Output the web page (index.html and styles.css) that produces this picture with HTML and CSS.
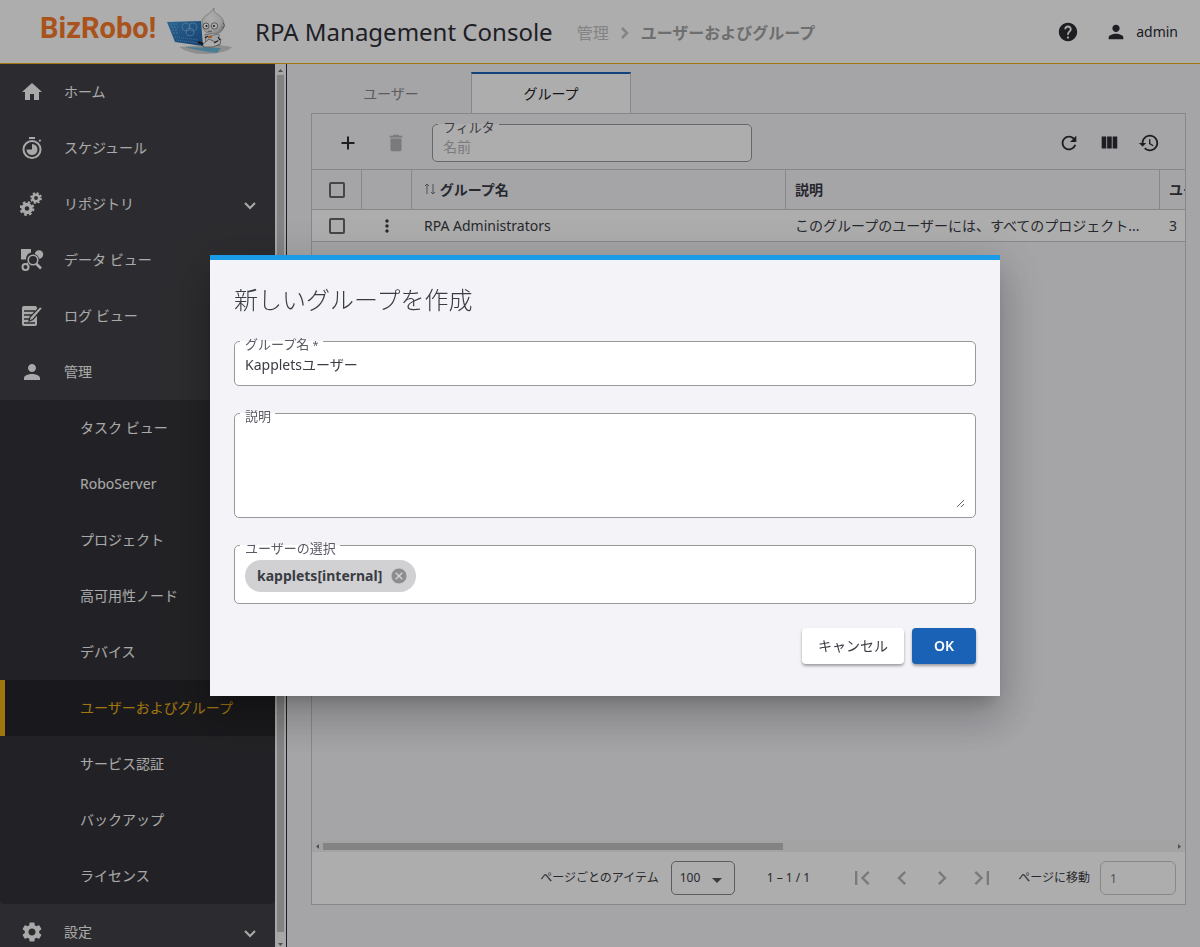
FILE: index.html
```html
<!DOCTYPE html>
<html lang="ja">
<head>
    <meta charset="UTF-8">
    <meta name="viewport" content="width=device-width, initial-scale=1.0">
    <title>RPA Management Console</title>
    <link rel="stylesheet" href="styles.css">
</head>
<body>
    <header class="header">
        <a href="#" class="logo">
            <span class="logo-text">BizRobo!</span>
            <svg class="logo-robot" width="66" height="48" viewBox="0 0 66 48">
                <defs>
                    <linearGradient id="screen" x1="0" y1="0" x2="1" y2="1">
                        <stop offset="0" stop-color="#3f95d6"/>
                        <stop offset="1" stop-color="#2160a8"/>
                    </linearGradient>
                    <radialGradient id="head" cx=".4" cy=".4" r=".7">
                        <stop offset="0" stop-color="#fff"/>
                        <stop offset=".7" stop-color="#e6e6e6"/>
                        <stop offset="1" stop-color="#a9a9a9"/>
                    </radialGradient>
                </defs>
                <path d="M12 39 46 36 65 39Q60 45 40 46 24 47 12 39z" fill="#d2d2d2"/>
                <path d="M18 39 54 40 50 45Q32 43 18 39z" fill="#6fb9dc"/>
                <path d="M35 12Q37 8 42 5.500 45 3 47 0 46 4 50 6 58 10 57 19 55 26 46 26 37 26 35 18z" fill="url(#head)" stroke="#999" stroke-width=".6"/>
                <path d="M38 26Q46 29 52 26L53 37 39 38z" fill="#efefef" stroke="#8d8d8d" stroke-width=".7"/>
                <path d="M36 36 42 31 48 34 54 31 53 36 46 39 36 39z" fill="#fff" stroke="#666" stroke-width=".7"/>
                <path d="M38 30l3-2M51 29l2 3M47 35l4-2" stroke="#333" stroke-width="1.200"/>
                <path d="M41 28h4v2h-4z" fill="#f28b3a"/>
                <circle cx="39" cy="18" r="3" fill="#fff" stroke="#666" stroke-width=".8"/>
                <circle cx="39.500" cy="18" r="1.100" fill="#333"/>
                <circle cx="47.500" cy="18" r="3.200" fill="#fff" stroke="#666" stroke-width=".8"/>
                <circle cx="47" cy="18" r="1.100" fill="#333"/>
                <path d="M41 23q2 1 4 0" fill="none" stroke="#666" stroke-width=".8"/>
                <path d="M56 15q3 2 0 5" fill="#ddd" stroke="#555" stroke-width=".8"/>
                <path d="M0 14 34 13 36 38 8 34z" fill="url(#screen)"/>
                <g fill="none" stroke="#a8d2ef" stroke-width=".7" opacity=".7">
                    <path d="M3 16h7M4 19h7M5 22h6M6 25h6" stroke-dasharray="2 1"/>
                    <path d="M8 29l24 3M9 32l23 3" stroke-dasharray="1 1"/>
                    <circle cx="19" cy="19" r="4"/>
                    <circle cx="26" cy="19" r="4"/>
                    <circle cx="23" cy="24" r="4"/>
                </g>
                <path d="M31 34l5 2" stroke="#222" stroke-width="2"/>
            </svg>
        </a>
        <h1 class="app-title">RPA Management Console</h1>
        <nav class="breadcrumb" aria-label="breadcrumb">
            <a href="#">管理</a>
            <svg width="8" height="14" viewBox="0 0 8 14"><path d="M1 2l5 5-5 5" fill="none" stroke="currentColor" stroke-width="2.500"/></svg>
            <span class="breadcrumb-current">ユーザーおよびグループ</span>
        </nav>
        <div class="header-actions">
            <button class="icon-btn" aria-label="ヘルプ">
                <svg width="22" height="22" viewBox="0 0 24 24"><path d="M12 2C6.48 2 2 6.48 2 12s4.48 10 10 10 10-4.48 10-10S17.52 2 12 2zm1 17h-2v-2h2v2zm2.07-7.75l-.9.92C13.45 12.9 13 13.5 13 15h-2v-.5c0-1.1.45-2.1 1.17-2.83l1.24-1.26c.37-.36.59-.86.59-1.41 0-1.1-.9-2-2-2s-2 .9-2 2H8c0-2.21 1.79-4 4-4s4 1.79 4 4c0 .88-.36 1.68-.93 2.25z"/></svg>
            </button>
            <button class="user-btn">
                <svg width="22" height="22" viewBox="0 0 24 24"><path d="M12 12c2.21 0 4-1.79 4-4s-1.79-4-4-4-4 1.79-4 4 1.79 4 4 4zm0 2c-2.67 0-8 1.34-8 4v2h16v-2c0-2.66-5.33-4-8-4z"/></svg>
                admin
            </button>
        </div>
    </header>

    <div class="layout">
        <aside class="sidebar">
            <nav class="menu">
                <a href="#" class="menu-item">
                    <svg width="24" height="24" viewBox="0 0 24 24"><path d="M10 20v-6h4v6h5v-8h3L12 3 2 12h3v8z"/></svg>
                    <span>ホーム</span>
                </a>
                <a href="#" class="menu-item">
                    <svg width="24" height="24" viewBox="0 0 24 24">
                        <circle cx="12" cy="13.5" r="8.5" fill="none" stroke="currentColor" stroke-width="2"/>
                        <path d="M9 1h6v2H9zM18.5 4.5l1.5-1.2 1.3 1.5-1.5 1.3z"/>
                        <path d="M12 8v5.500H6.500A5.500 5.500 0 1 0 12 8z"/>
                    </svg>
                    <span>スケジュール</span>
                </a>
                <a href="#" class="menu-item">
                    <svg width="24" height="24" viewBox="0 0 24 24">
                        <circle cx="7" cy="16.500" r="4" fill="none" stroke="currentColor" stroke-width="3.400"/>
                        <circle cx="7" cy="16.500" r="6.300" fill="none" stroke="currentColor" stroke-width="2.200" stroke-dasharray="2.600 2.350"/>
                        <circle cx="16" cy="6" r="3.200" fill="none" stroke="currentColor" stroke-width="2.600"/>
                        <circle cx="16" cy="6" r="5" fill="none" stroke="currentColor" stroke-width="1.800" stroke-dasharray="2.100 1.830"/>
                    </svg>
                    <span>リポジトリ</span>
                    <svg class="menu-arrow" width="12" height="8" viewBox="0 0 12 8"><path d="M1 1l5 5 5-5" fill="none" stroke="currentColor" stroke-width="2"/></svg>
                </a>
                <a href="#" class="menu-item">
                    <svg width="24" height="24" viewBox="0 0 24 24">
                        <path d="M1 1h10v3.500A7 7 0 0 0 6 11.500H1z"/>
                        <circle cx="19" cy="6.500" r="4.200"/>
                        <circle cx="5.500" cy="19" r="3" fill="none" stroke="currentColor" stroke-width="2"/>
                        <path d="M6.500 17l2-3" fill="none" stroke="currentColor" stroke-width="1.500"/>
                        <circle cx="13" cy="12" r="6.200" fill="#424247"/>
                        <circle cx="13" cy="12" r="4.800" fill="none" stroke="currentColor" stroke-width="1.600"/>
                        <path d="M16 15.500l5 5" fill="none" stroke="currentColor" stroke-width="2.600"/>
                    </svg>
                    <span>データ ビュー</span>
                </a>
                <a href="#" class="menu-item">
                    <svg width="24" height="24" viewBox="0 0 24 24">
                        <rect x="2" y="2" width="15" height="20" rx="2"/>
                        <path d="M4 7h11M4 11h8M4 15h5M4 19h11" fill="none" stroke="#424247" stroke-width="1.700"/>
                        <path d="M9 17l1-4L20 2.500l2.500 2L13 15.500z" stroke="#424247" stroke-width="1.200"/>
                    </svg>
                    <span>ログ ビュー</span>
                </a>
                <a href="#" class="menu-item">
                    <svg width="24" height="24" viewBox="0 0 24 24"><path d="M12 12c2.210 0 4-1.790 4-4s-1.790-4-4-4-4 1.790-4 4 1.790 4 4 4zm0 2c-2.670 0-8 1.340-8 4v2h16v-2c0-2.660-5.330-4-8-4z"/></svg>
                    <span>管理</span>
                </a>
                <div class="submenu">
                    <a href="#" class="menu-item">タスク ビュー</a>
                    <a href="#" class="menu-item">RoboServer</a>
                    <a href="#" class="menu-item">プロジェクト</a>
                    <a href="#" class="menu-item">高可用性ノード</a>
                    <a href="#" class="menu-item">デバイス</a>
                    <a href="#" class="menu-item active">ユーザーおよびグループ</a>
                    <a href="#" class="menu-item">サービス認証</a>
                    <a href="#" class="menu-item">バックアップ</a>
                    <a href="#" class="menu-item">ライセンス</a>
                </div>
                <a href="#" class="menu-item">
                    <svg width="24" height="24" viewBox="0 0 24 24"><path d="M19.14 12.94c.04-.3.06-.61.06-.94 0-.32-.02-.64-.07-.94l2.03-1.58c.18-.14.23-.41.12-.61l-1.92-3.32c-.12-.22-.37-.29-.59-.22l-2.39.96c-.5-.38-1.03-.7-1.62-.94l-.36-2.54c-.04-.24-.24-.41-.48-.41h-3.84c-.24 0-.43.17-.47.41l-.36 2.54c-.59.24-1.13.57-1.62.94l-2.39-.96c-.22-.08-.47 0-.59.22L2.74 8.87c-.12.21-.08.47.12.61l2.03 1.58c-.05.3-.09.63-.09.94s.02.64.07.94l-2.03 1.58c-.18.14-.23.41-.12.61l1.92 3.32c.12.22.37.29.59.22l2.39-.96c.5.38 1.03.7 1.62.94l.36 2.54c.05.24.24.41.48.41h3.84c.24 0 .44-.17.47-.41l.36-2.54c.59-.24 1.13-.56 1.62-.94l2.39.96c.22.08.47 0 .59-.22l1.92-3.32c.12-.22.07-.47-.12-.61l-2.01-1.58zM12 15.600c-1.980 0-3.600-1.620-3.600-3.600s1.620-3.600 3.600-3.600 3.600 1.620 3.600 3.600-1.620 3.600-3.600 3.600z"/></svg>
                    <span>設定</span>
                    <svg class="menu-arrow" width="12" height="8" viewBox="0 0 12 8"><path d="M1 1l5 5 5-5" fill="none" stroke="currentColor" stroke-width="2"/></svg>
                </a>
            </nav>
            <div class="scrollbar scrollbar-y">
                <svg width="5" height="3" viewBox="0 0 5 3"><path d="M0 3h5L2.500 0z"/></svg>
                <div class="thumb"></div>
                <svg width="5" height="3" viewBox="0 0 5 3"><path d="M0 0h5L2.500 3z"/></svg>
            </div>
        </aside>

        <main class="content">
            <div class="tabs" role="tablist">
                <button class="tab" role="tab">ユーザー</button>
                <button class="tab active" role="tab" aria-selected="true">グループ</button>
            </div>

            <section class="panel">
                <div class="toolbar">
                    <button class="icon-btn" aria-label="追加">
                        <svg width="24" height="24" viewBox="0 0 24 24"><path d="M18.500 13H13v5.500h-2V13H5.500v-2H11V5.500h2V11h5.500z"/></svg>
                    </button>
                    <button class="icon-btn" aria-label="削除" disabled>
                        <svg width="22" height="22" viewBox="0 0 24 24"><path d="M6 19c0 1.100.9 2 2 2h8c1.100 0 2-.9 2-2V7H6v12zM19 4h-3.500l-1-1h-5l-1 1H5v2h14V4z"/></svg>
                    </button>
                    <div class="field filter">
                        <label for="filter">フィルタ</label>
                        <input type="text" id="filter" placeholder="名前">
                    </div>
                    <div class="toolbar-right">
                        <button class="icon-btn" aria-label="更新">
                            <svg width="22" height="22" viewBox="0 0 24 24"><path d="M17.65 6.35C16.2 4.9 14.21 4 12 4c-4.42 0-7.99 3.58-7.99 8s3.57 8 7.99 8c3.73 0 6.84-2.55 7.73-6h-2.08c-.82 2.33-3.04 4-5.65 4-3.31 0-6-2.69-6-6s2.69-6 6-6c1.66 0 3.14.69 4.22 1.78L13 11h7V4l-2.35 2.35z"/></svg>
                        </button>
                        <button class="icon-btn" aria-label="列">
                            <svg width="22" height="22" viewBox="0 0 24 24"><path d="M10 18h5V5h-5v13zm-6 0h5V5H4v13zM16 5v13h5V5h-5z"/></svg>
                        </button>
                        <button class="icon-btn" aria-label="リセット">
                            <svg width="22" height="22" viewBox="0 0 24 24"><path d="M13 3c-4.97 0-9 4.03-9 9H1l3.89 3.89.07.14L9 12H6c0-3.87 3.13-7 7-7s7 3.13 7 7-3.13 7-7 7c-1.93 0-3.68-.79-4.94-2.06l-1.42 1.42C8.27 19.99 10.51 21 13 21c4.97 0 9-4.03 9-9s-4.03-9-9-9zm-1 5v5l4.28 2.54.72-1.21-3.5-2.08V8H12z"/></svg>
                        </button>
                    </div>
                </div>

                <div class="table-wrap">
                    <table class="groups">
                        <colgroup>
                            <col class="col-icon">
                            <col class="col-icon">
                            <col class="col-text">
                            <col class="col-text">
                            <col>
                        </colgroup>
                        <thead>
                            <tr>
                                <th class="center"><input type="checkbox" aria-label="すべて選択"></th>
                                <th></th>
                                <th class="name">
                                    <svg width="12" height="12" viewBox="0 0 12 12"><path d="M3 11V1M1 3l2-2 2 2M9 1v10M7 9l2 2 2-2" fill="none" stroke="currentColor"/></svg>
                                    グループ名
                                </th>
                                <th>説明</th>
                                <th>ユーザー</th>
                            </tr>
                        </thead>
                        <tbody>
                            <tr>
                                <td class="center"><input type="checkbox" aria-label="選択"></td>
                                <td class="center">
                                    <button class="row-menu" aria-label="メニュー">
                                        <svg width="20" height="20" viewBox="0 0 24 24"><path d="M12 8c1.100 0 2-.9 2-2s-.9-2-2-2-2 .9-2 2 .9 2 2 2zm0 2c-1.100 0-2 .9-2 2s.9 2 2 2 2-.9 2-2-.9-2-2-2zm0 6c-1.100 0-2 .9-2 2s.9 2 2 2 2-.9 2-2-.9-2-2-2z"/></svg>
                                    </button>
                                </td>
                                <td class="name">RPA Administrators</td>
                                <td>このグループのユーザーには、すべてのプロジェクト...</td>
                                <td>3</td>
                            </tr>
                        </tbody>
                    </table>
                </div>

                <div class="scrollbar scrollbar-x">
                    <svg width="3" height="5" viewBox="0 0 3 5"><path d="M3 0v5L0 2.500z"/></svg>
                    <div class="track"><div class="thumb"></div></div>
                    <svg width="3" height="5" viewBox="0 0 3 5"><path d="M0 0v5l3-2.500z"/></svg>
                </div>

                <div class="pager">
                    <label for="pageSize">ページごとのアイテム</label>
                    <div class="page-size">
                        <select id="pageSize">
                            <option>100</option>
                        </select>
                    </div>
                    <span class="range">1 – 1 / 1</span>
                    <div class="pager-buttons">
                        <button aria-label="最初のページ" disabled><svg width="28" height="28" viewBox="0 0 24 24"><path d="M18.410 16.590L13.820 12l4.590-4.590L17 6l-6 6 6 6zM6 6h2v12H6z"/></svg></button>
                        <button aria-label="前のページ" disabled><svg width="28" height="28" viewBox="0 0 24 24"><path d="M15.410 7.410L14 6l-6 6 6 6 1.410-1.410L10.830 12z"/></svg></button>
                        <button aria-label="次のページ" disabled><svg width="28" height="28" viewBox="0 0 24 24"><path d="M10 6L8.590 7.410 13.170 12l-4.580 4.590L10 18l6-6z"/></svg></button>
                        <button aria-label="最後のページ" disabled><svg width="28" height="28" viewBox="0 0 24 24"><path d="M5.590 7.410L10.180 12l-4.590 4.590L7 18l6-6-6-6zM16 6h2v12h-2z"/></svg></button>
                    </div>
                    <label for="pageNumber">ページに移動</label>
                    <input type="text" id="pageNumber" class="page-number" value="1">
                </div>
            </section>
        </main>
    </div>

    <div class="overlay">
        <form class="dialog" role="dialog" aria-labelledby="dialogTitle">
            <h2 id="dialogTitle">新しいグループを作成</h2>
            <div class="field">
                <label for="groupName">グループ名 <small>*</small></label>
                <input type="text" id="groupName" class="group-name" value="Kappletsユーザー">
            </div>
            <div class="field">
                <label for="description">説明</label>
                <textarea id="description"></textarea>
            </div>
            <div class="field users" role="group" aria-labelledby="usersLabel">
                <span class="field-label" id="usersLabel">ユーザーの選択</span>
                <div class="chip">
                    kapplets[internal]
                    <button type="button" aria-label="削除">
                        <svg width="18" height="18" viewBox="0 0 24 24"><path d="M12 2C6.47 2 2 6.47 2 12s4.47 10 10 10 10-4.47 10-10S17.53 2 12 2zm5 13.59L15.59 17 12 13.41 8.41 17 7 15.59 10.59 12 7 8.41 8.41 7 12 10.59 15.59 7 17 8.41 13.41 12 17 15.59z"/></svg>
                    </button>
                </div>
            </div>
            <div class="dialog-actions">
                <button type="button" class="btn">キャンセル</button>
                <button type="button" class="btn btn-primary">OK</button>
            </div>
        </form>
    </div>
</body>
</html>
```

FILE: styles.css
```css
:root {
    --page: #f3f3f8;
    --text: #3a3c44;
    --border: #c9c9cc;
    --field-border: #999;
    --menu: #424247;
    --submenu: #333338;
    --accent: #ebb014;
    --primary: #1a62b5;
}

* {
    margin: 0;
    padding: 0;
    box-sizing: border-box;
}

body {
    height: 100vh;
    display: flex;
    flex-direction: column;
    overflow: hidden;
    font-family: "Noto Sans", "Noto Sans CJK JP", sans-serif;
    font-size: 14px;
    line-height: 20px;
    color: var(--text);
    background: var(--page);
}

button,
input,
select,
textarea {
    font: inherit;
    color: inherit;
    border: none;
    background: none;
    outline: none;
}

button {
    cursor: pointer;
}

svg {
    display: block;
    flex: none;
    fill: currentColor;
}

/* Header */
.header {
    flex: none;
    height: 64px;
    display: flex;
    align-items: center;
    padding: 0 22px 0 40px;
    background: #fff;
    border-bottom: 1px solid var(--accent);
}

.logo {
    display: flex;
    align-items: center;
    gap: 11px;
    width: 215px;
    text-decoration: none;
}

.logo-text {
    font-family: Roboto, sans-serif;
    font-size: 29px;
    font-weight: 700;
    line-height: 40px;
    padding-bottom: 8px;
    color: #fb792a;
}

.app-title {
    font-size: 24px;
    font-weight: 400;
    line-height: 32px;
    color: #2e2e38;
}

.breadcrumb {
    display: flex;
    align-items: center;
    gap: 12px;
    margin-left: 24px;
    padding-top: 2px;
    font-size: 16px;
    color: #c2c2c5;
}

.breadcrumb a {
    color: inherit;
    text-decoration: none;
}

.breadcrumb-current {
    font-weight: 700;
    color: #a3a3a6;
}

.header-actions {
    display: flex;
    align-items: center;
    gap: 17px;
    margin-left: auto;
    color: #2b2c33;
}

.user-btn {
    display: flex;
    align-items: center;
    gap: 9px;
}

.icon-btn {
    width: 40px;
    height: 40px;
    display: flex;
    align-items: center;
    justify-content: center;
    color: #2b2c33;
}

.icon-btn:disabled {
    color: #b4b4b8;
}

/* Sidebar */
.layout {
    flex: 1;
    min-height: 0;
    display: flex;
}

.sidebar {
    width: 287px;
    display: flex;
    flex: none;
    border-right: 1px solid #2d2d33;
}

.menu {
    flex: 1;
    overflow: hidden;
    background: var(--menu);
}

.menu-item {
    height: 56px;
    display: flex;
    align-items: center;
    gap: 20px;
    padding: 0 19px 0 20px;
    color: #fafafa;
    text-decoration: none;
}

.menu-arrow {
    margin: 4px 0 0 auto;
}

.submenu {
    background: var(--submenu);
    border-radius: 0 0 4px 4px;
}

.submenu .menu-item {
    padding-left: 75px;
    border-left: 5px solid transparent;
}

.submenu .menu-item.active {
    color: var(--accent);
    background: #26262b;
    border-left-color: var(--accent);
}

.scrollbar {
    display: flex;
    align-items: center;
    flex: none;
    color: #777;
}

.scrollbar-y {
    flex-direction: column;
    width: 11px;
    gap: 3px;
    padding: 5px 0 1px;
    background: #f6f6f6;
}

.scrollbar-y .thumb {
    flex: 1;
    width: 7px;
    margin-bottom: 8px;
    background: #c2c2c2;
}

/* Content */
.content {
    flex: 1;
    min-width: 0;
    display: flex;
    flex-direction: column;
    padding: 8px 14px 42px 24px;
}

.tabs {
    display: flex;
    height: 41px;
}

.tab {
    width: 160px;
    color: #88888d;
    border-top: 2px solid transparent;
}

.tab.active {
    color: #222;
    background: #fff;
    border: 1px solid var(--border);
    border-top: 2px solid var(--primary);
    border-bottom: none;
}

.panel {
    flex: 1;
    min-height: 0;
    display: flex;
    flex-direction: column;
    border: 1px solid var(--border);
}

.toolbar {
    height: 56px;
    display: flex;
    align-items: center;
    gap: 8px;
    padding: 2px 16px 0;
    border-bottom: 1px solid var(--border);
}

.toolbar-right {
    display: flex;
    margin-left: auto;
}

/* Outlined field with its label over the top border */
.field {
    position: relative;
    background: #fff;
    border: 1px solid var(--field-border);
    border-radius: 5px;
}

.field label,
.field-label {
    position: absolute;
    top: -1px;
    left: 5px;
    padding: 0 4px 0 5px;
    font-size: 13px;
    line-height: 6px;
    color: #5b5b66;
    background: #fff;
}

.field input {
    display: block;
    width: 100%;
    padding: 0 10px;
}

.filter {
    width: 320px;
    margin-left: 8px;
}

.filter input {
    height: 36px;
    padding-top: 8px;
}

.filter input::placeholder {
    color: #b5b5b8;
}

.table-wrap {
    flex: 1;
    min-height: 0;
    overflow: hidden;
}

.groups {
    width: 1615px;
    table-layout: fixed;
    border-collapse: separate;
    border-spacing: 0;
}

.col-icon {
    width: 50px;
}

.col-text {
    width: 374px;
}

.groups th,
.groups td {
    padding: 0 9px;
    text-align: left;
    white-space: nowrap;
    border-bottom: 1px solid var(--border);
}

.groups th {
    height: 40px;
    border-right: 1px solid var(--border);
}

.groups td {
    height: 32px;
    background: #fff;
}

.groups .name {
    padding-left: 12px;
}

.groups th.name svg {
    display: inline-block;
    color: #777;
}

.groups .center {
    text-align: center;
}

.groups input {
    width: 16px;
    height: 16px;
    display: block;
    margin: 0 auto;
    appearance: none;
    border: 2px solid #66676d;
    border-radius: 2px;
}

.row-menu {
    display: block;
    margin: 0 auto;
}

.scrollbar-x {
    height: 11px;
    gap: 4px;
    padding: 0 4px;
    background: #f1f1f1;
}

.scrollbar-x .track {
    flex: 1;
}

.scrollbar-x .thumb {
    width: 54%;
    height: 7px;
    background: #c2c2c2;
}

.pager {
    height: 52px;
    display: flex;
    align-items: center;
    justify-content: flex-end;
    padding-right: 9px;
    font-size: 12px;
    background: #fff;
}

.page-size {
    position: relative;
    margin: 0 32px 0 12px;
}

.page-size select {
    width: 64px;
    height: 34px;
    padding-left: 8px;
    appearance: none;
    border: 1px solid #88888c;
    border-radius: 5px;
}

.page-size::after {
    content: "";
    position: absolute;
    top: 17px;
    right: 13px;
    border: 5px solid transparent;
    border-top-color: #55565c;
    border-bottom: none;
    pointer-events: none;
}

.pager-buttons {
    display: flex;
    margin: 0 16px 0 32px;
}

.pager-buttons button {
    width: 40px;
    height: 40px;
    display: flex;
    align-items: center;
    justify-content: center;
    color: #b4b4b8;
}

.page-number {
    width: 76px;
    height: 34px;
    margin-left: 10px;
    padding: 0 9px;
    color: #77777c;
    border: 1px solid var(--border);
    border-radius: 6px;
}

/* Dialog */
.overlay {
    position: fixed;
    inset: 0;
    display: flex;
    align-items: center;
    justify-content: center;
    padding: 4px 0 0 10px;
    background: rgba(0, 0, 0, 0.32);
}

.dialog {
    width: 790px;
    padding: 24px 24px 32px;
    background: var(--page);
    border-top: 5px solid #1a9be8;
    box-shadow: 0 11px 15px -7px rgba(0, 0, 0, 0.2), 0 24px 38px 3px rgba(0, 0, 0, 0.14), 0 9px 46px 8px rgba(0, 0, 0, 0.12);
}

.dialog h2 {
    margin-bottom: 25px;
    font-size: 24px;
    font-weight: 300;
    line-height: 32px;
}

.dialog .field {
    margin-bottom: 27px;
}

.field small {
    font-size: 11px;
}

.group-name {
    height: 43px;
}

.field textarea {
    display: block;
    width: calc(100% - 20px);
    height: 86px;
    margin: 8px 10px 9px;
    resize: vertical;
}

.dialog .users {
    display: flex;
    padding: 14px 10px 11px;
    margin-bottom: 24px;
}

.chip {
    height: 32px;
    display: flex;
    align-items: center;
    gap: 8px;
    padding: 0 8px 0 12px;
    font-weight: 700;
    background: #d1d1d3;
    border-radius: 16px;
}

.chip button {
    color: #8d8d90;
}

.dialog-actions {
    display: flex;
    justify-content: flex-end;
    gap: 8px;
}

.btn {
    min-width: 64px;
    height: 36px;
    padding: 0 16px;
    background: #fff;
    border-radius: 4px;
    box-shadow: 0 2px 3px rgba(0, 0, 0, 0.35);
}

.btn-primary {
    font-weight: 600;
    color: #fff;
    background: var(--primary);
}
```
